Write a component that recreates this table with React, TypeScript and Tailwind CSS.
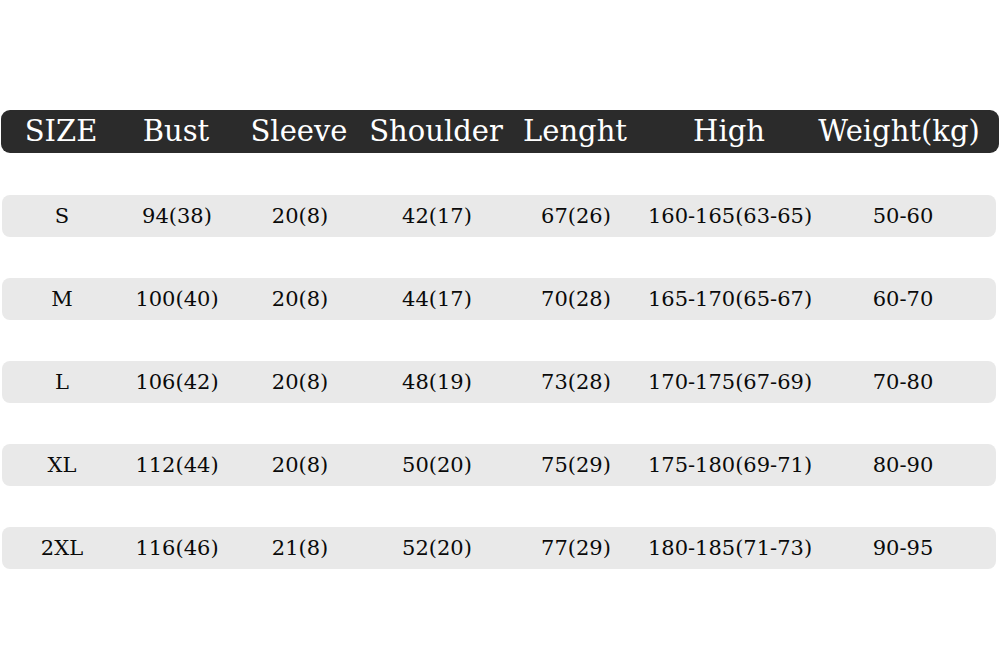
import React from 'react';

const headers = ['SIZE', 'Bust', 'Sleeve', 'Shoulder', 'Lenght', 'High', 'Weight(kg)'];

const rows: string[][] = [
  ['S', '94(38)', '20(8)', '42(17)', '67(26)', '160-165(63-65)', '50-60'],
  ['M', '100(40)', '20(8)', '44(17)', '70(28)', '165-170(65-67)', '60-70'],
  ['L', '106(42)', '20(8)', '48(19)', '73(28)', '170-175(67-69)', '70-80'],
  ['XL', '112(44)', '20(8)', '50(20)', '75(29)', '175-180(69-71)', '80-90'],
  ['2XL', '116(46)', '21(8)', '52(20)', '77(29)', '180-185(71-73)', '90-95'],
];

const cols = 'grid grid-cols-[120px_110px_136px_138px_140px_168px_1fr] items-center';

const App: React.FC = () => {
  return (
    <div className="w-[1000px] h-[660px] bg-white font-['DejaVu_Serif',serif] overflow-hidden">
      <div className={`${cols} mt-[110px] ml-[1px] mr-[1px] h-[43px] rounded-[9px] bg-[#2b2b2b] text-white text-[29px] leading-none`}>
        {headers.map((h, i) => (
          <div key={i} className={`text-center whitespace-nowrap ${i === 6 ? 'pr-[14px]' : ''}`}>
            {h}
          </div>
        ))}
      </div>

      <div className="mt-[42px] flex flex-col gap-[41px] ml-[2px] mr-[4px]">
        {rows.map((r, ri) => (
          <div key={ri} className={`${cols} h-[42px] rounded-[8px] bg-[#e9e9e9] text-[#0a0a0a] text-[21px] leading-none`}>
            {r.map((c, ci) => (
              <div key={ci} className={`text-center whitespace-nowrap ${ci === 6 ? 'pr-[4px]' : ''}`}>
                {c}
              </div>
            ))}
          </div>
        ))}
      </div>
    </div>
  );
};

export default App;
